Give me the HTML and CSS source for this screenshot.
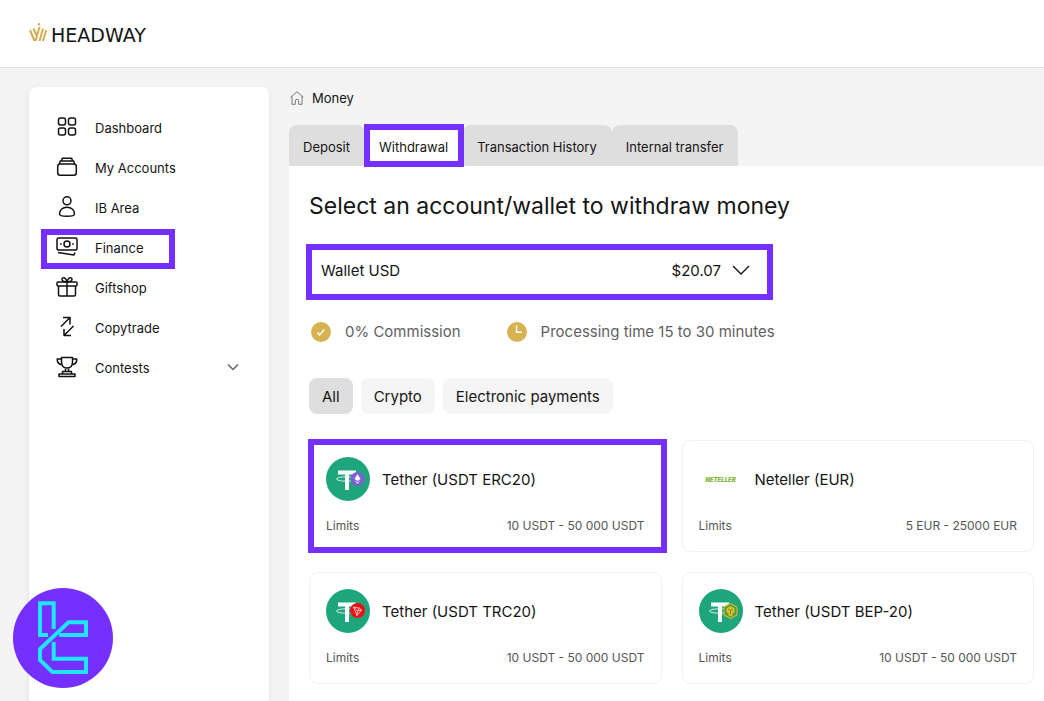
FILE: index.html
```
<!DOCTYPE html>
<html lang="en">
<head>
  <meta charset="UTF-8" />
  <meta name="viewport" content="width=device-width, initial-scale=1.0" />
  <title>Headway - Money</title>
  <link rel="stylesheet" href="styles.css">
</head>
<body>
  <header class="header">
    <a href="#" class="logo">
      <svg width="18" height="19" viewBox="0 0 18 19" fill="none" stroke="#d3ad52" stroke-width="2">
        <path d="M1 7l4.500 11M4.500 5.500l3 7M6.500 18l4-14M10.500 18l3.500-12.500M14 18l3.200-11"/>
        <circle cx="10" cy="1.200" r="1.200" fill="#d3ad52" stroke="none"/>
      </svg>
      <span>HEADWAY</span>
    </a>
  </header>

  <div class="layout">
    <nav class="sidebar">
      <a href="#" class="nav-item">
        <svg width="22" height="22" viewBox="0 0 22 22"><rect x="2.500" y="2" width="7" height="7" rx="2"/><rect x="12.500" y="2" width="7" height="7" rx="2"/><rect x="2.500" y="12" width="7" height="7" rx="2"/><rect x="12.500" y="12" width="7" height="7" rx="2"/></svg>
        <span>Dashboard</span>
      </a>
      <a href="#" class="nav-item">
        <svg width="22" height="22" viewBox="0 0 22 22"><rect x="1.700" y="8" width="18.600" height="11.300" rx="2.500"/><path d="M3.300 8l1-3h13.400l1 3M5.500 5l.8-2.700h9.400l.8 2.700"/></svg>
        <span>My Accounts</span>
      </a>
      <a href="#" class="nav-item">
        <svg width="22" height="22" viewBox="0 0 22 22"><circle cx="11" cy="4.800" r="4"/><path d="M3.500 18c0-4.200 3.300-6.800 7.500-6.800s7.500 2.600 7.500 6.800c0 1.300-3.500 2.300-7.500 2.300S3.500 19.300 3.500 18z"/></svg>
        <span>IB Area</span>
      </a>
      <a href="#" class="nav-item highlight">
        <svg width="22" height="22" viewBox="0 0 22 22"><rect x="1" y="2" width="20" height="12" rx="1.800"/><circle cx="11" cy="8" r="3"/><path d="M4.200 8h1.600M16.200 8h1.600M2 16.500l16 2.500 1-2.500"/></svg>
        <span>Finance</span>
      </a>
      <a href="#" class="nav-item">
        <svg width="22" height="22" viewBox="0 0 22 22"><rect x="1" y="6" width="20" height="4" rx="1"/><path d="M2.500 10v8.500a1.500 1.500 0 0 0 1.500 1.500h14a1.500 1.500 0 0 0 1.500-1.500V10M11 6v14M11 6C7 6 6 4.500 6 3s3.500-3 5 3c1.500-6 5-4.500 5-3s-1 3-5 3z"/></svg>
        <span>Giftshop</span>
      </a>
      <a href="#" class="nav-item">
        <svg width="22" height="22" viewBox="0 0 22 22"><path d="M5 10.500L13.500 2M7 1.500h7v7M17.500 10L8 19.500M8 13v6.500h7"/></svg>
        <span>Copytrade</span>
      </a>
      <a href="#" class="nav-item nav-wide">
        <svg width="22" height="22" viewBox="0 0 22 22"><path d="M5.500 1.500h11V6c0 3.500-2 6-5.500 6S5.500 9.500 5.500 6zM5.500 3H1.200c0 3.500 1.800 5.500 5 5.800M16.500 3h4.300c0 3.500-1.800 5.500-5 5.800M9.500 12v3.500M12.500 12v3.500M6.500 18v-2.500h9V18M3 20.500V18h16v2.500z"/></svg>
        <span>Contests</span>
        <svg class="chevron" width="12" height="8" viewBox="0 0 12 8"><path d="M1 1.500l5 5 5-5"/></svg>
      </a>
    </nav>

    <main class="main">
      <div class="breadcrumb">
        <svg width="14" height="14" viewBox="0 0 14 14" fill="none" stroke="#777"><path d="M.6 6.300L7 .7l6.400 5.600M2 5.500v7.800h3.300V10a1.700 1.700 0 0 1 3.400 0v3.300H12V5.500"/></svg>
        <span>Money</span>
      </div>

      <div class="tabs">
        <button class="tab">Deposit</button>
        <button class="tab active highlight">Withdrawal</button>
        <button class="tab">Transaction History</button>
        <button class="tab">Internal transfer</button>
      </div>

      <section class="panel">
        <h1>Select an account/wallet to withdraw money</h1>

        <div class="wallet">
          <select id="wallet" aria-label="Wallet">
            <option>Wallet USD</option>
          </select>
          <label for="wallet" class="balance">
            $20.07
            <svg width="18" height="10" viewBox="0 0 18 10" fill="none" stroke="#111" stroke-width="1.300"><path d="M1 1l8 8 8-8"/></svg>
          </label>
        </div>

        <div class="terms">
          <div class="term">
            <svg width="20" height="20" viewBox="0 0 20 20" fill="none" stroke="#fff" stroke-width="1.400"><circle cx="10" cy="10" r="10" fill="#d6b251" stroke="none"/><path d="M6.500 10.500l2.200 2.500 4.500-5.500"/></svg>
            <span>0% Commission</span>
          </div>
          <div class="term">
            <svg width="20" height="20" viewBox="0 0 20 20" fill="none" stroke="#fff" stroke-width="1.400"><circle cx="10" cy="10" r="10" fill="#d6b251" stroke="none"/><path d="M9.500 3.500v6.800h5.500"/></svg>
            <span>Processing time 15 to 30 minutes</span>
          </div>
        </div>

        <div class="filters">
          <button class="filter selected">All</button>
          <button class="filter">Crypto</button>
          <button class="filter">Electronic payments</button>
        </div>

        <div class="methods">
          <a href="#" class="card highlight">
            <div class="card-head">
              <svg width="44" height="44" viewBox="0 0 44 44">
                <circle cx="22" cy="22" r="22" fill="#1ea57b"/>
                <path d="M12 13.500h18v4h-7v15.500h-4V17.500h-7z" fill="#fff"/>
                <ellipse cx="20" cy="22" rx="9.500" ry="2.200" fill="none" stroke="#fff" stroke-width=".8"/>
                <circle cx="31.500" cy="22" r="7" fill="#7b5fd3"/>
                <path d="M31.500 17l3 5-3 2-3-2z" fill="#fff"/><path d="M28.500 23.200l3 2 3-2-3 4z" fill="#d9cff6"/>
              </svg>
              <span>Tether (USDT ERC20)</span>
            </div>
            <div class="limits"><span>Limits</span><span>10 USDT - 50 000 USDT</span></div>
          </a>
          <a href="#" class="card">
            <div class="card-head">
              <span class="neteller">NETELLER</span>
              <span>Neteller (EUR)</span>
            </div>
            <div class="limits"><span>Limits</span><span>5 EUR - 25000 EUR</span></div>
          </a>
          <a href="#" class="card">
            <div class="card-head">
              <svg width="44" height="44" viewBox="0 0 44 44">
                <circle cx="22" cy="22" r="22" fill="#1ea57b"/>
                <path d="M12 13.500h18v4h-7v15.500h-4V17.500h-7z" fill="#fff"/>
                <ellipse cx="20" cy="22" rx="9.500" ry="2.200" fill="none" stroke="#fff" stroke-width=".8"/>
                <circle cx="31.500" cy="21.500" r="7.500" fill="#f00d14"/>
                <path d="M27.500 18l6 1.200 2 1.800-4.500 5.500zM27.500 18l4 3.800 4-.8M31.500 21.800l2-2.600M31.500 21.800l-.5 4.700" fill="none" stroke="#fff" stroke-width=".7"/>
              </svg>
              <span>Tether (USDT TRC20)</span>
            </div>
            <div class="limits"><span>Limits</span><span>10 USDT - 50 000 USDT</span></div>
          </a>
          <a href="#" class="card">
            <div class="card-head">
              <svg width="44" height="44" viewBox="0 0 44 44">
                <circle cx="22" cy="22" r="22" fill="#1ea57b"/>
                <path d="M12 13.500h18v4h-7v15.500h-4V17.500h-7z" fill="#fff"/>
                <ellipse cx="20" cy="22" rx="9.500" ry="2.200" fill="none" stroke="#fff" stroke-width=".8"/>
                <path d="M31.500 14.500l6.500 3.700v7.600l-6.500 3.700-6.500-3.700v-7.600z" fill="#4a9d4c" stroke="#c9b729" stroke-width="1.200"/>
                <path d="M31.500 17l4 2.300v4l-2 1.200v2l-2 1-2-1v-2l-2-1.200v-4z" fill="#e3bd20"/><path d="M29 20l2.500 1.500L34 20M31.500 21.500v3.500" fill="none" stroke="#4a8d43" stroke-width=".9"/>
              </svg>
              <span>Tether (USDT BEP-20)</span>
            </div>
            <div class="limits"><span>Limits</span><span>10 USDT - 50 000 USDT</span></div>
          </a>
        </div>
      </section>
    </main>
  </div>

  <a href="#" class="badge" aria-label="TC">
    <svg width="100" height="100" viewBox="0 0 100 100" fill="none" stroke="#1fe5ff" stroke-width="4">
      <circle cx="50" cy="50" r="50" fill="#752fff" stroke="none"/>
      <path d="M35 47h-8V15.300h13.700V41"/>
      <path d="M46 47h27V34.300H55.500L27 61v11l12.300 12H73V70.700H40.700V54"/>
    </svg>
  </a>
</body>
</html>
```
FILE: styles.css
```
* {
  box-sizing: border-box;
}
body {
  margin: 0;
  font-family: Inter, "Liberation Sans", sans-serif;
  font-size: 13px;
  color: #151515;
  background: #f4f4f4;
  min-height: 100vh;
  display: flex;
  flex-direction: column;
}
a {
  color: inherit;
  text-decoration: none;
}
button, select {
  font: inherit;
  color: inherit;
  border: none;
  cursor: pointer;
}
.header {
  height: 68px;
  padding: 2px 29px 0;
  display: flex;
  align-items: center;
  background: #fff;
  border-bottom: 1px solid #e0e0e0;
}
.logo {
  display: flex;
  align-items: center;
  gap: 4px;
  font-family: "DejaVu Sans", sans-serif;
  font-size: 19px;
}
.logo svg {
  margin-bottom: 4px;
}
.layout {
  flex: 1;
  display: flex;
  gap: 20px;
  padding: 19px 0 0 29px;
}
.sidebar {
  flex: none;
  width: 240px;
  padding: 22px 12px;
  display: flex;
  flex-direction: column;
  align-items: flex-start;
  background: #fff;
  border-radius: 8px 8px 0 0;
  box-shadow: 0 2px 6px rgba(0,0,0,0.08);
}
.nav-item {
  height: 40px;
  padding: 0 31px 2px 15px;
  display: flex;
  align-items: center;
  gap: 17px;
}
.nav-item svg {
  margin-bottom: 2px;
  fill: none;
  stroke: #111;
  stroke-width: 1.5;
  stroke-linejoin: round;
}
.nav-wide {
  align-self: stretch;
  padding-right: 18px;
}
.nav-item .chevron {
  margin-left: auto;
  stroke: #666;
}
.highlight {
  position: relative;
  outline: 6px solid #752fff;
  outline-offset: -5px;
}
.nav-item.highlight {
  outline-offset: -6px;
}
.main {
  flex: 1;
  min-width: 0;
  display: flex;
  flex-direction: column;
}
.breadcrumb {
  display: flex;
  align-items: center;
  gap: 8px;
  padding: 0 1px;
  height: 22px;
}
.tabs {
  display: flex;
  margin-top: 16px;
}
.tab {
  height: 41px;
  padding: 2px 15px 0 14px;
  background: #dedede;
  border-radius: 8px 8px 0 0;
}
.tab.active {
  background: #fff;
  border-radius: 0;
}
.panel {
  flex: 1;
  padding: 22px 10px 17px 20px;
  background: #fff;
}
h1 {
  margin: 0;
  font-size: 23px;
  line-height: 36px;
  font-weight: 400;
}
.wallet {
  display: grid;
  align-items: center;
  width: 467px;
  max-width: 100%;
  height: 56px;
  margin: 20px 0 0 -3px;
  border: 6px solid #752fff;
  font-size: 15px;
}
.wallet select {
  grid-area: 1 / 1;
  height: 44px;
  padding: 0 9px 4px;
  appearance: none;
  background: #fff;
}
.balance {
  grid-area: 1 / 1;
  justify-self: end;
  display: flex;
  align-items: center;
  gap: 11px;
  padding: 0 17px 4px 0;
  pointer-events: none;
}
.terms {
  display: flex;
  gap: 46px;
  margin-top: 20px;
  padding-left: 2px;
  font-size: 15px;
  line-height: 24px;
  color: #5f5f5f;
}
.term {
  display: flex;
  align-items: center;
  gap: 14px;
}
.filters {
  display: flex;
  gap: 8px;
  margin: 34px 0 26px;
}
.filter {
  height: 36px;
  padding: 0 13px;
  font-size: 15px;
  background: #f5f5f5;
  border-radius: 8px;
}
.filter.selected {
  background: #dedede;
}
.methods {
  display: grid;
  grid-template-columns: 1fr 1fr;
  gap: 20px;
}
.card {
  height: 112px;
  padding: 16px;
  border: 1px solid #f2f2f2;
  border-radius: 8px;
}
.card.highlight {
  margin-right: -4px;
  padding-right: 20px;
  border-radius: 0;
}
.card-head {
  display: flex;
  align-items: center;
  gap: 12px;
  height: 44px;
  font-size: 15px;
}
.limits {
  display: flex;
  justify-content: space-between;
  margin-top: 16px;
  font-size: 12px;
  line-height: 18px;
  color: #555;
}
.neteller {
  width: 44px;
  text-align: center;
  font-size: 6px;
  font-weight: 900;
  font-style: italic;
  color: #83ba3b;
}
.badge {
  position: fixed;
  left: 13px;
  bottom: 13px;
  height: 100px;
}
```
